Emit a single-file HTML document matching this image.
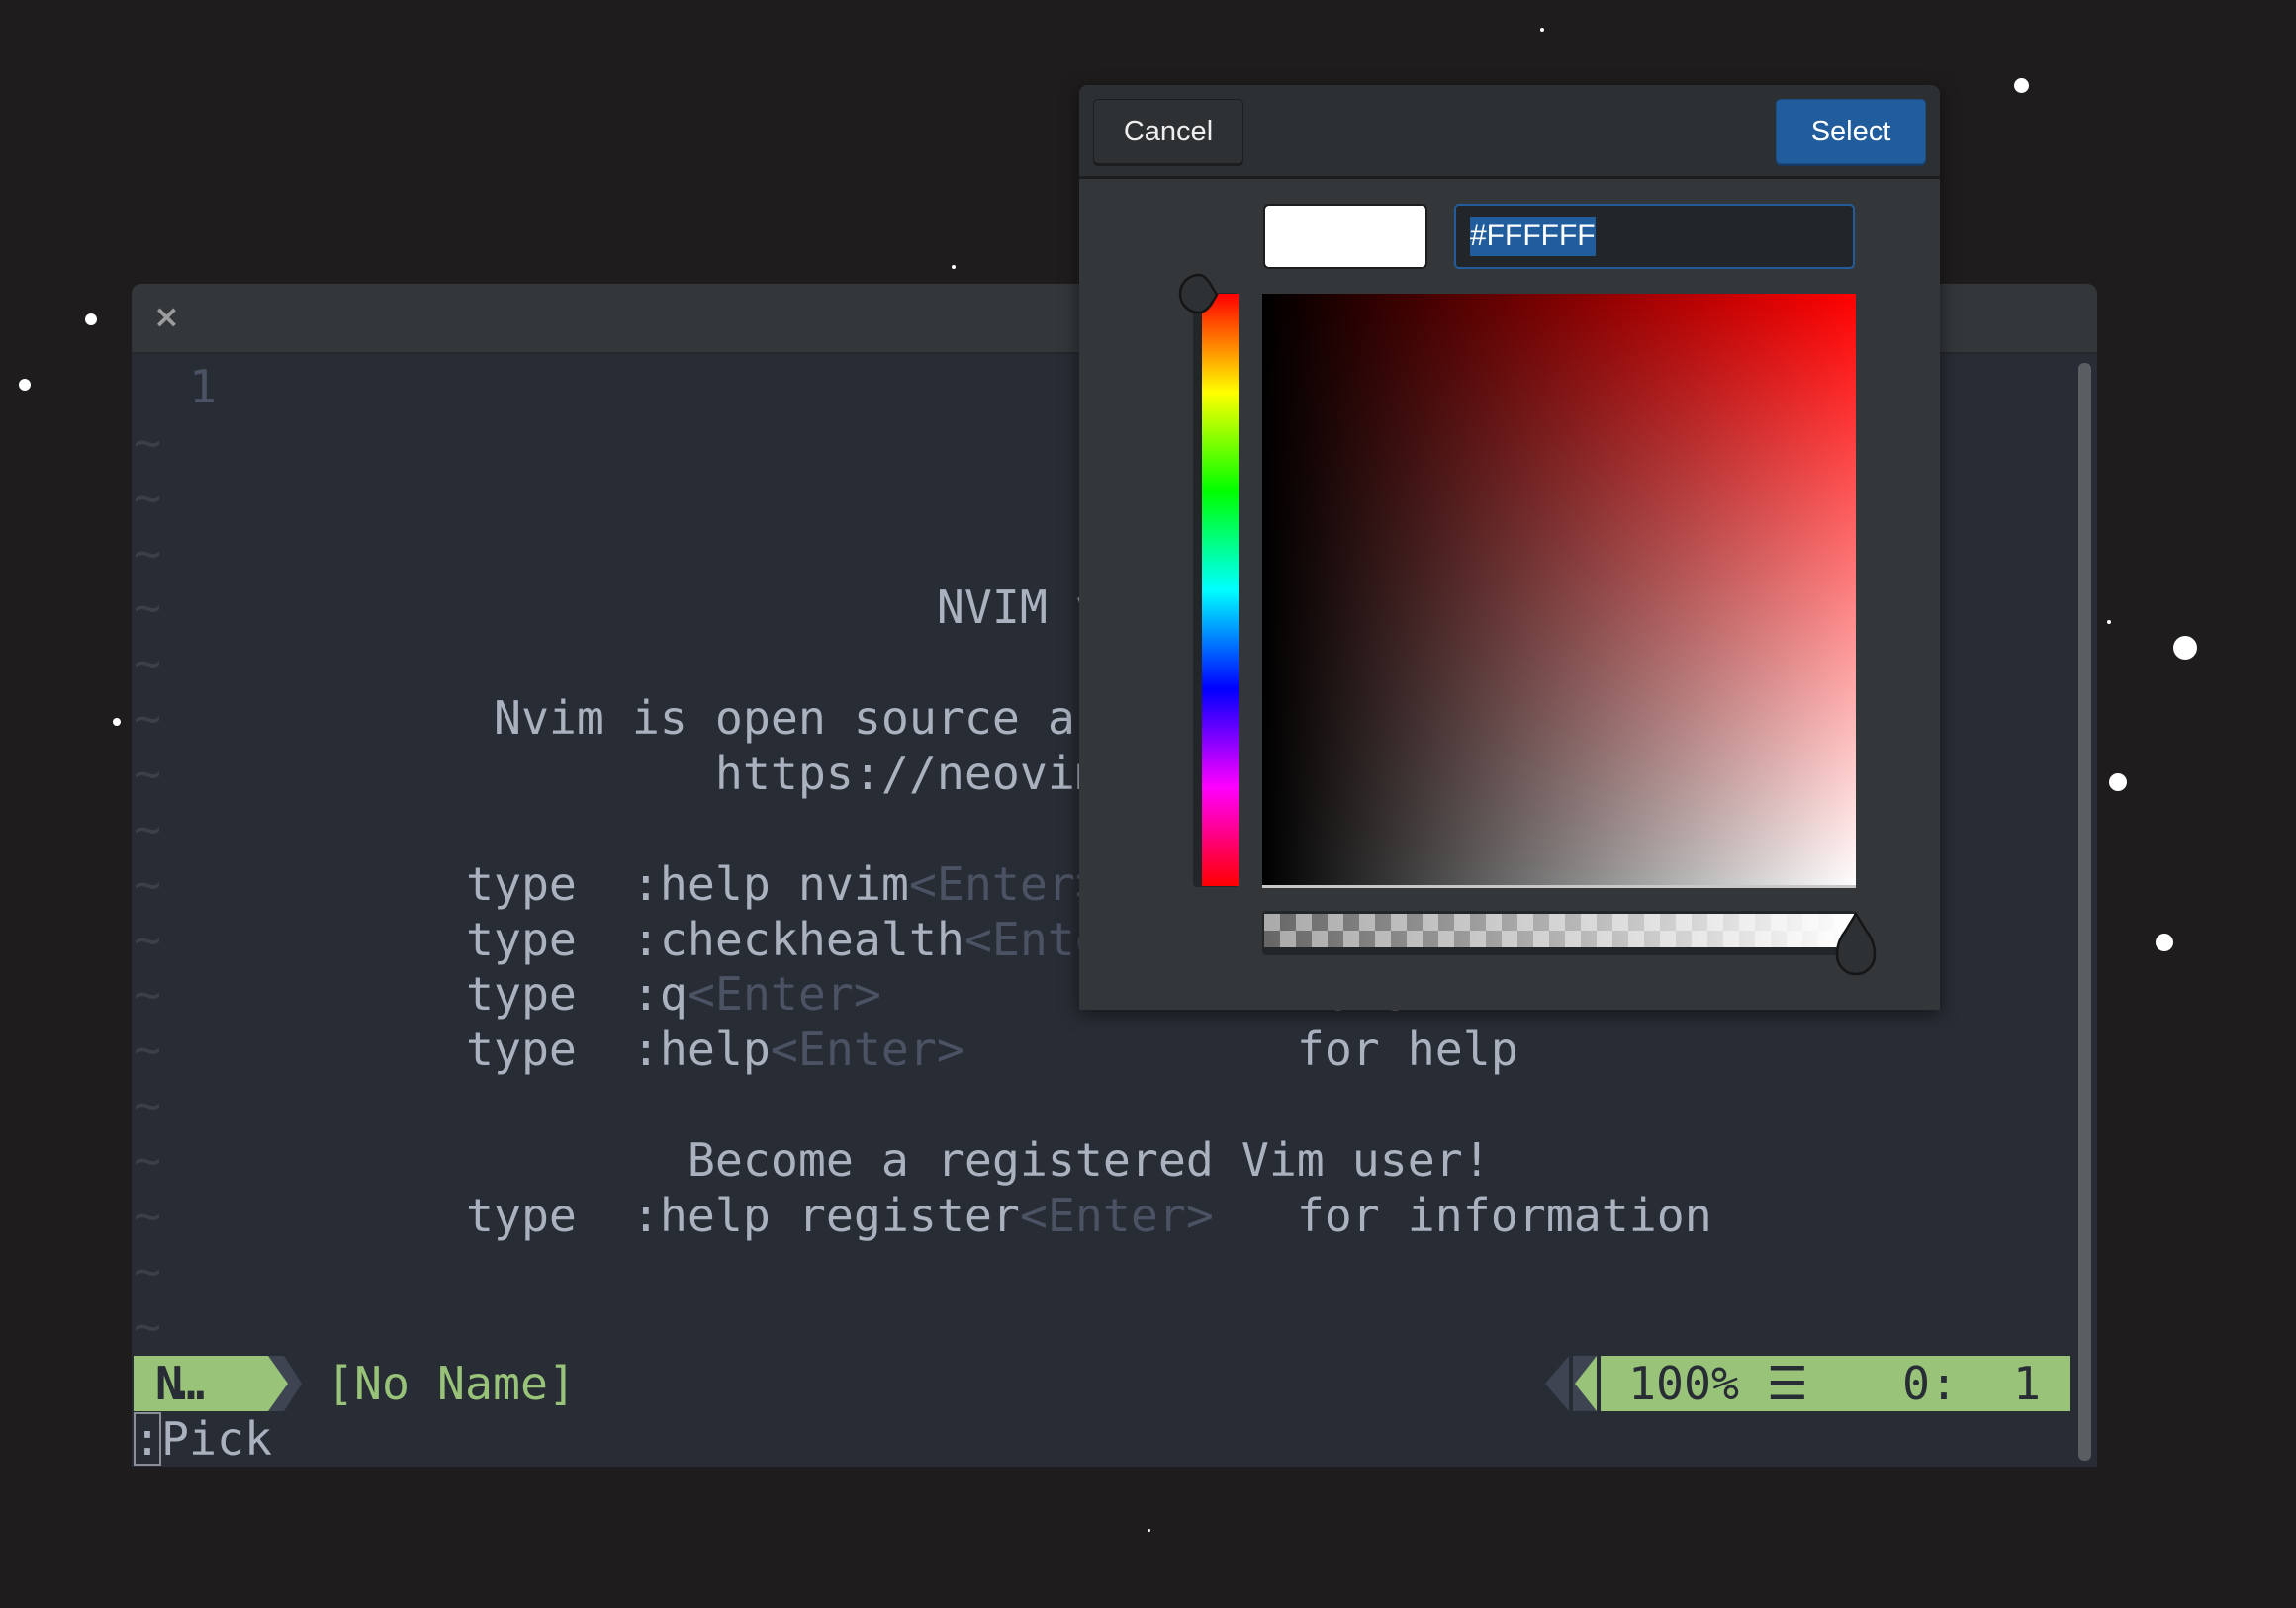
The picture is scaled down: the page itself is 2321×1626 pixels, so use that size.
<!DOCTYPE html>
<html><head><meta charset="utf-8"><style>
*{margin:0;padding:0;box-sizing:border-box}
body{width:2321px;height:1626px;background:#1f1c1d;position:relative;overflow:hidden;font-family:"DejaVu Sans Mono","Liberation Mono",monospace}
.a{position:absolute}
.star{position:absolute;background:#fff;border-radius:50%}
#win{left:133px;top:287px;width:1987px;height:1196px;background:#282c34;border-radius:10px 10px 0 0;overflow:hidden}
#hdr{left:0;top:0;width:100%;height:71px;background:#33373a;border-bottom:2px solid #25282b}
pre{position:absolute;left:2px;top:77px;font-family:"DejaVu Sans Mono",monospace;font-size:46.5px;line-height:55.86px;color:#abb2bf;white-space:pre}
.d{color:#4b5263}.t{color:#3b4048}.g{color:#98c379}
#dlg{left:1091px;top:86px;width:870px;height:935px;background:#33373a;border-radius:9px 9px 0 0;box-shadow:0 4px 18px rgba(0,0,0,.5)}
.btn{position:absolute;top:14px;height:66px;border-radius:5px;font-family:"Liberation Sans",sans-serif;font-size:29px;color:#eee;text-align:center;line-height:64px}
</style></head><body>
<div class="star" style="left:86px;top:317px;width:12px;height:12px"></div>
<div class="star" style="left:19px;top:383px;width:12px;height:12px"></div>
<div class="star" style="left:114px;top:726px;width:8px;height:8px"></div>
<div class="star" style="left:2036px;top:79px;width:15px;height:15px"></div>
<div class="star" style="left:2197px;top:643px;width:24px;height:24px"></div>
<div class="star" style="left:2132px;top:782px;width:18px;height:18px"></div>
<div class="star" style="left:2179px;top:944px;width:18px;height:18px"></div>
<div class="star" style="left:1557px;top:28px;width:4px;height:4px"></div>
<div class="star" style="left:962px;top:268px;width:4px;height:4px"></div>
<div class="star" style="left:1160px;top:1546px;width:3px;height:3px"></div>
<div class="star" style="left:2130px;top:627px;width:4px;height:4px"></div>

<div id="win" class="a">
 <div id="hdr" class="a"><div class="a" style="left:22px;top:14px;font-family:'DejaVu Sans',sans-serif;font-size:32px;color:#9a9c9e;font-weight:bold">×</div></div>
<pre><span class="d">  1</span>
<span class="t">~</span>
<span class="t">~</span>
<span class="t">~</span>
<span class="t">~</span>                            NVIM v0.10.0
<span class="t">~</span>
<span class="t">~</span>            Nvim is open source and freely distributable
<span class="t">~</span>                    https://neovim.io/#chat
<span class="t">~</span>
<span class="t">~</span>           type  :help nvim<span class="d">&lt;Enter&gt;</span>       if you are new!
<span class="t">~</span>           type  :checkhealth<span class="d">&lt;Enter&gt;</span>     to optimize Nvim
<span class="t">~</span>           type  :q<span class="d">&lt;Enter&gt;</span>               to exit
<span class="t">~</span>           type  :help<span class="d">&lt;Enter&gt;</span>            for help
<span class="t">~</span>
<span class="t">~</span>                   Become a registered Vim user!
<span class="t">~</span>           type  :help register<span class="d">&lt;Enter&gt;</span>   for information
<span class="t">~</span>
<span class="t">~</span></pre>
 <div class="a" style="left:2px;top:1084px;width:136px;height:56px;background:#98c379"></div>
 <div class="a" style="left:24px;top:1084px;height:56px;line-height:56px;font-size:46.5px;color:#282c34;font-weight:bold;letter-spacing:-6px">N…</div>
 <svg class="a" style="left:138px;top:1084px" width="50" height="56"><polygon points="0,0 16,0 34,28 16,56 0,56" fill="#3e4452"/><polygon points="0,0 0,56 20,28" fill="#98c379"/></svg>
 <div class="a g" style="left:197px;top:1084px;height:56px;line-height:56px;font-size:46.5px">[No Name]</div>
 <svg class="a" style="left:1429px;top:1084px" width="60" height="56"><polygon points="0,28 24,0 24,56" fill="#3e4452"/><rect x="28" y="0" width="29" height="56" fill="#3e4452"/><polygon points="52,0 52,56 30,28" fill="#98c379"/><rect x="52" y="0" width="4" height="56" fill="#282c34"/></svg>
 <div class="a" style="left:1485px;top:1084px;width:475px;height:56px;background:#98c379;color:#282c34;font-size:46.5px;line-height:56px;white-space:pre"> 100% ☰</div>
 <div class="a" style="left:1790px;top:1084px;height:56px;color:#282c34;font-size:46.5px;line-height:56px;white-space:pre">0:  1</div>
 <div class="a" style="left:1968px;top:80px;width:13px;height:1110px;background:#5a5e63;border-radius:6px"></div>
 <div class="a" style="left:2px;top:1140px;height:56px;line-height:56px;font-size:46.5px;color:#abb2bf;white-space:pre"><span style="outline:2px solid #8a8f98;outline-offset:-2px">:</span>Pick</div>
</div>

<div id="dlg" class="a">
 <div class="a" style="left:0;top:0;width:870px;height:95px;background:#2d3033;border-bottom:3px solid #1b1d1f;border-radius:9px 9px 0 0"></div>
 <div class="btn" style="left:14px;width:152px;background:#2d3134;border:1px solid #1b1d1f;box-shadow:0 2px 0 #1b1d1f">Cancel</div>
 <div class="btn" style="left:704px;width:152px;background:#215d9c;border:1px solid #1a4d85;box-shadow:0 2px 0 #173a63;color:#fff">Select</div>
 <div class="a" style="left:186px;top:120px;width:166px;height:66px;background:#fff;border-radius:6px;border:2px solid #1b1d1f"></div>
 <div class="a" style="left:379px;top:120px;width:405px;height:66px;background:#232629;border:2px solid #215d9c;border-radius:5px"><span style="position:absolute;left:14px;top:11px;height:40px;background:#215d9c;color:#fff;font-family:'Liberation Sans',sans-serif;font-size:30px;line-height:40px">#FFFFFF</span></div>
 <div class="a" style="left:115px;top:210px;width:46px;height:601px;background:#232629;border-radius:4px"></div>
 <div class="a" style="left:124px;top:211px;width:37px;height:599px;background:linear-gradient(#f00,#ff0 16.7%,#0f0 33.3%,#0ff 50%,#00f 66.7%,#f0f 83.3%,#f00)"></div>
 <svg class="a" style="left:97px;top:189px" width="50" height="50"><path d="M24,3 A19,19 0 1 0 24,41 Q30,41 36,33 L42,23 L36,13 Q30,3 24,3Z" fill="#2d3134" stroke="#141516" stroke-width="2.5"/></svg>
 <div class="a" style="left:185px;top:211px;width:600px;height:600px;background:linear-gradient(to right,#000,rgba(0,0,0,0)),linear-gradient(to bottom,#f00,#fff)"></div>
 <div class="a" style="left:185px;top:809px;width:600px;height:3px;background:#c8c8c8"></div>
 <div class="a" style="left:185px;top:835px;width:600px;height:45px;background:#232629;border-radius:4px"></div>
 <div class="a" style="left:187px;top:838px;width:596px;height:34px;background:linear-gradient(to right,rgba(255,255,255,0),#fff),repeating-conic-gradient(#666 0 25%,#aaa 0 50%) 0 0/32px 34px"></div>
 <svg class="a" style="left:760px;top:830px" width="50" height="80"><path d="M25,8 L36,26 Q44,36 44,50 A19,19 0 1 1 6,50 Q6,36 14,26Z" fill="#2d3134" stroke="#141516" stroke-width="2.5"/></svg>
</div>
</body></html>
